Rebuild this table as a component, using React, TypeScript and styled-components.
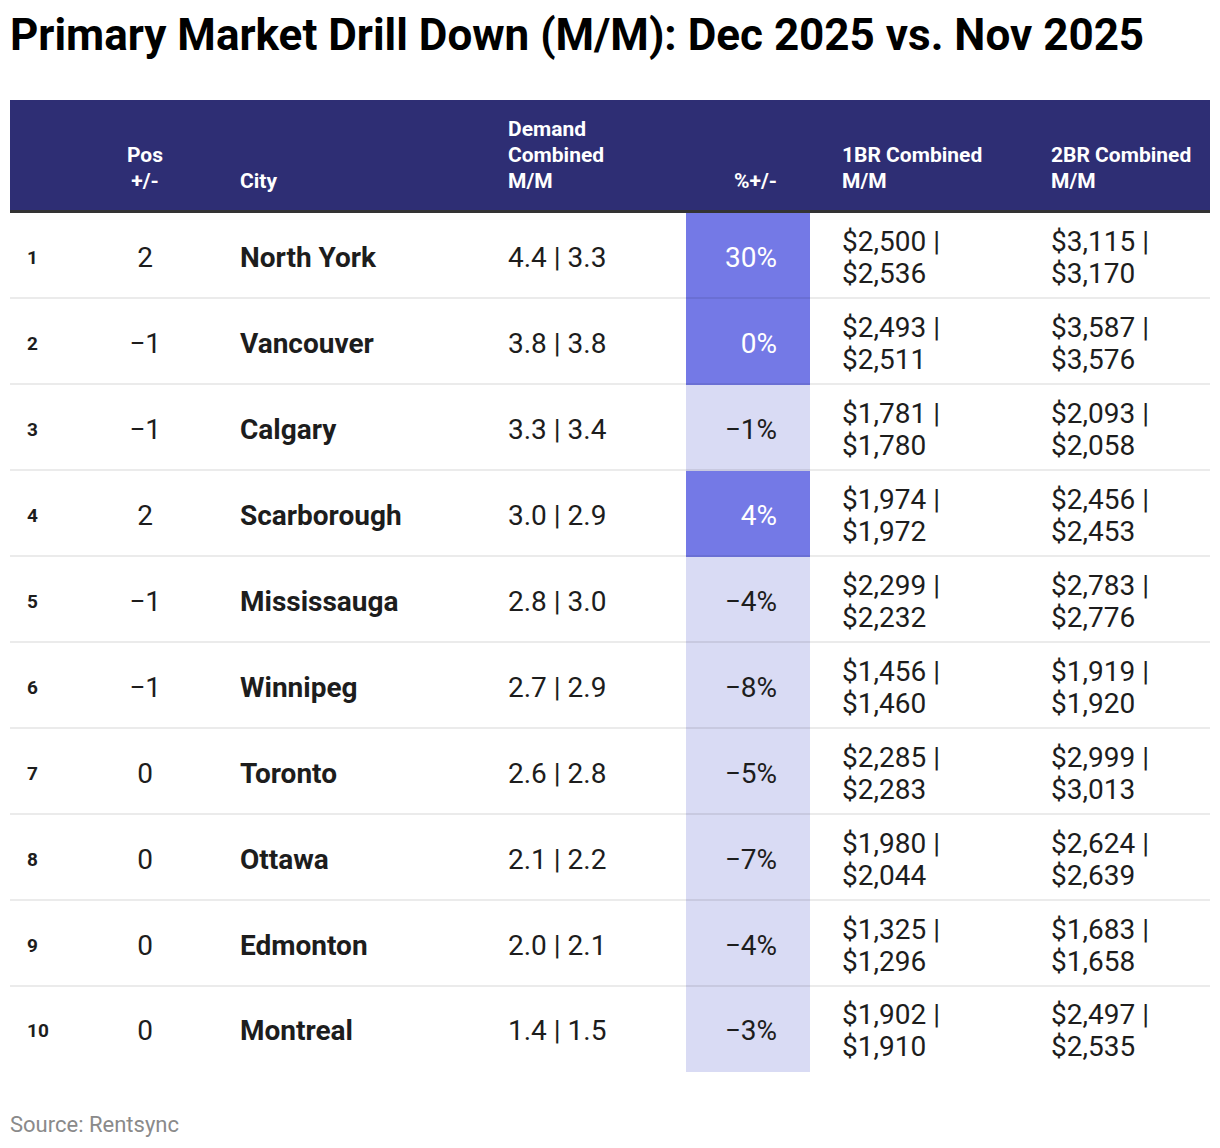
import React from "react";
import styled, { createGlobalStyle } from "styled-components";

const Global = createGlobalStyle`
  html, body { margin: 0; padding: 0; background: #ffffff; }
  body { font-family: Roboto, "Liberation Sans", sans-serif; color: #1d1d1d; }
`;

const Page = styled.div`
  width: 1200px;
  padding: 0 10px;
`;

const Title = styled.h1`
  margin: 0;
  height: 100px;
  padding-top: 10px;
  box-sizing: border-box;
  font-size: 44px;
  line-height: 50px;
  font-weight: 700;
  color: #000;
  white-space: nowrap;
`;

const COLS = "50px 170px 268px 188px 124px 231px 169px";

const HeadRow = styled.div`
  display: grid;
  grid-template-columns: ${COLS};
  height: 113px;
  box-sizing: border-box;
  background: #2e2e74;
  border-bottom: 3px solid #333333;
  align-items: end;
  padding-bottom: 16px;
`;

type Align = "left" | "center" | "right";

const HeadCell = styled.div<{ $align?: Align; $pl?: number; $pr?: number }>`
  color: #ffffff;
  font-weight: 700;
  font-size: 21px;
  line-height: 26px;
  text-align: ${(p) => p.$align || "left"};
  padding-left: ${(p) => p.$pl ?? 10}px;
  padding-right: ${(p) => p.$pr ?? 10}px;
  white-space: pre-line;
`;

const Row = styled.div<{ $last?: boolean }>`
  display: grid;
  grid-template-columns: ${COLS};
  height: ${(p) => (p.$last ? 85 : 86)}px;
`;

const Cell = styled.div<{ $align?: Align; $pl?: number; $pr?: number; $last?: boolean }>`
  display: flex;
  flex-direction: column;
  justify-content: center;
  align-items: ${(p) => (p.$align === "center" ? "center" : p.$align === "right" ? "flex-end" : "flex-start")};
  padding-top: 3px;
  padding-left: ${(p) => p.$pl ?? 10}px;
  padding-right: ${(p) => p.$pr ?? 10}px;
  box-shadow: ${(p) => (p.$last ? "none" : "inset 0 -2px 0 rgba(0,0,0,0.08)")};
  font-size: 28px;
  line-height: 32px;
  color: #1d1d1d;
  white-space: nowrap;
`;

const Rank = styled(Cell)`
  font-size: 19px;
  font-weight: 700;
`;

const City = styled(Cell)`
  font-weight: 700;
`;

const Pct = styled(Cell)<{ $strong: boolean }>`
  background: ${(p) => (p.$strong ? "#7479e6" : "#d9dbf4")};
  color: ${(p) => (p.$strong ? "#ffffff" : "#1d1d1d")};
`;

const Source = styled.div`
  margin-top: 40px;
  font-size: 22px;
  line-height: 26px;
  color: #8a8a8a;
`;

type R = {
  pos: string;
  city: string;
  demand: string;
  pct: string;
  strong: boolean;
  br1: [string, string];
  br2: [string, string];
};

const rows: R[] = [
  { pos: "2", city: "North York", demand: "4.4 | 3.3", pct: "30%", strong: true, br1: ["$2,500 |", "$2,536"], br2: ["$3,115 |", "$3,170"] },
  { pos: "\u22121", city: "Vancouver", demand: "3.8 | 3.8", pct: "0%", strong: true, br1: ["$2,493 |", "$2,511"], br2: ["$3,587 |", "$3,576"] },
  { pos: "\u22121", city: "Calgary", demand: "3.3 | 3.4", pct: "\u22121%", strong: false, br1: ["$1,781 |", "$1,780"], br2: ["$2,093 |", "$2,058"] },
  { pos: "2", city: "Scarborough", demand: "3.0 | 2.9", pct: "4%", strong: true, br1: ["$1,974 |", "$1,972"], br2: ["$2,456 |", "$2,453"] },
  { pos: "\u22121", city: "Mississauga", demand: "2.8 | 3.0", pct: "\u22124%", strong: false, br1: ["$2,299 |", "$2,232"], br2: ["$2,783 |", "$2,776"] },
  { pos: "\u22121", city: "Winnipeg", demand: "2.7 | 2.9", pct: "\u22128%", strong: false, br1: ["$1,456 |", "$1,460"], br2: ["$1,919 |", "$1,920"] },
  { pos: "0", city: "Toronto", demand: "2.6 | 2.8", pct: "\u22125%", strong: false, br1: ["$2,285 |", "$2,283"], br2: ["$2,999 |", "$3,013"] },
  { pos: "0", city: "Ottawa", demand: "2.1 | 2.2", pct: "\u22127%", strong: false, br1: ["$1,980 |", "$2,044"], br2: ["$2,624 |", "$2,639"] },
  { pos: "0", city: "Edmonton", demand: "2.0 | 2.1", pct: "\u22124%", strong: false, br1: ["$1,325 |", "$1,296"], br2: ["$1,683 |", "$1,658"] },
  { pos: "0", city: "Montreal", demand: "1.4 | 1.5", pct: "\u22123%", strong: false, br1: ["$1,902 |", "$1,910"], br2: ["$2,497 |", "$2,535"] },
];

export default function App() {
  return (
    <Page>
      <Global />
      <Title>Primary Market Drill Down (M/M): Dec 2025 vs. Nov 2025</Title>
      <HeadRow>
        <HeadCell $pl={17} />
        <HeadCell $align="center">{"Pos\n+/-"}</HeadCell>
        <HeadCell>City</HeadCell>
        <HeadCell>{"Demand\nCombined\nM/M"}</HeadCell>
        <HeadCell $align="right" $pr={33}>%+/-</HeadCell>
        <HeadCell $pl={32}>{"1BR Combined\nM/M"}</HeadCell>
        <HeadCell>{"2BR Combined\nM/M"}</HeadCell>
      </HeadRow>
      {rows.map((r, i) => {
        const last = i === rows.length - 1;
        return (
          <Row key={r.city} $last={last}>
            <Rank $pl={17} $last={last}>{i + 1}</Rank>
            <Cell $align="center" $last={last}>{r.pos}</Cell>
            <City $last={last}>{r.city}</City>
            <Cell $last={last}>{r.demand}</Cell>
            <Pct $align="right" $pr={33} $strong={r.strong} $last={last}>{r.pct}</Pct>
            <Cell $pl={32} $last={last}>
              <span>{r.br1[0]}</span>
              <span>{r.br1[1]}</span>
            </Cell>
            <Cell $last={last}>
              <span>{r.br2[0]}</span>
              <span>{r.br2[1]}</span>
            </Cell>
          </Row>
        );
      })}
      <Source>Source: Rentsync</Source>
    </Page>
  );
}
